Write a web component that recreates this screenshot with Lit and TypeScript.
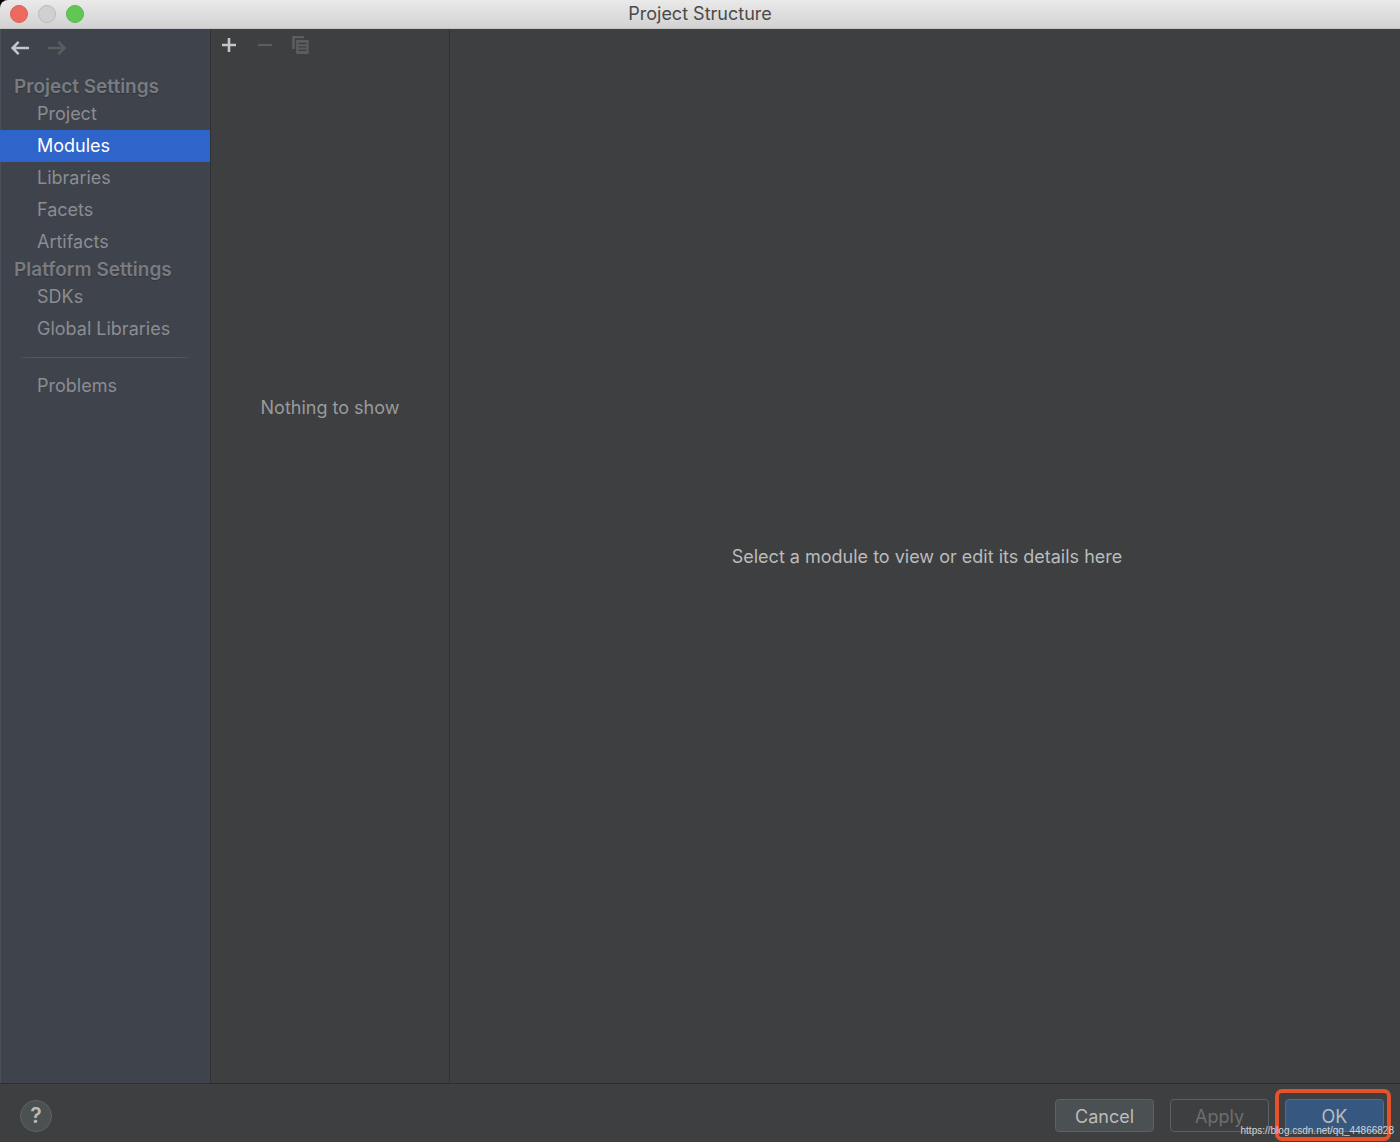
import { LitElement, html, css, svg } from "lit";
import { customElement, state } from "lit/decorators.js";

interface Section {
  title: string;
  items: string[];
}

const SECTIONS: Section[] = [
  { title: "Project Settings", items: ["Project", "Modules", "Libraries", "Facets", "Artifacts"] },
  { title: "Platform Settings", items: ["SDKs", "Global Libraries"] },
];

const arrowLeft = svg`<path d="M19 10H2.5M8.6 3.9L2.6 10L8.6 16.1" fill="none" stroke="currentColor" stroke-width="2.5"/>`;
const arrowRight = svg`<path d="M2 10H18.5M12.4 3.9L18.4 10L12.4 16.1" fill="none" stroke="currentColor" stroke-width="2.5"/>`;
const plus = svg`<path d="M10 3V17M3 10H17" fill="none" stroke="currentColor" stroke-width="2.6"/>`;
const minus = svg`<path d="M3 10H17" fill="none" stroke="currentColor" stroke-width="2.2"/>`;
const copy = svg`
  <path d="M1.2 1H13.2V3.2H3.8V14H1.2Z" fill="currentColor"/>
  <path fill-rule="evenodd" d="M5.2 5H17.6V19H5.2ZM7.4 7.8V9.2H15.4V7.8ZM7.4 11.2V12.6H15.4V11.2ZM7.4 14.6V16H15.4V14.6Z" fill="currentColor"/>`;

@customElement("app-root")
export class AppRoot extends LitElement {
  @state() private selected = "Modules";

  static styles = css`
    :host {
      display: flex;
      flex-direction: column;
      min-height: 100vh;
      background: #3d3f41;
      color: #bbbbbb;
      font: 18px/22px Inter, "Liberation Sans", sans-serif;
    }
    * {
      box-sizing: border-box;
    }
    button {
      font: inherit;
      color: inherit;
      margin: 0;
      padding: 0;
      border: 0;
      background: none;
    }
    svg {
      display: block;
    }
    .corner {
      background: #000;
    }
    .titlebar {
      display: grid;
      grid-template-columns: 1fr auto 1fr;
      align-items: center;
      height: 29px;
      padding: 0 10px;
      border-radius: 8px 0 0 0;
      border-bottom: 1px solid #c4c4c4;
      background: linear-gradient(#eaeaea, #d2d2d2);
      color: #4a4a4a;
    }
    .lights {
      display: flex;
      gap: 10px;
    }
    .light {
      width: 18px;
      height: 18px;
      border-radius: 50%;
      border: 1px solid #dc5f55;
      background: #ed6a5f;
    }
    .light.idle {
      border-color: #bcbcbc;
      background: #d0d0d0;
    }
    .light.zoom {
      border-color: #58b84b;
      background: #61c654;
    }
    .title {
      margin: 0;
      font-size: 18px;
      line-height: 24px;
      font-weight: 400;
    }
    .body {
      display: flex;
      flex: 1;
    }
    .sidebar {
      flex: 0 0 211px;
      border-right: 1px solid #2f3235;
      background: linear-gradient(90deg, #4a4f58 1px, #3e434c 1px);
      color: #8b8d91;
    }
    .history {
      display: flex;
      align-items: flex-start;
      gap: 16px;
      height: 46px;
      padding: 9px 10px;
      color: #c3c6ca;
    }
    button:disabled {
      color: #5b5e61;
    }
    .section {
      margin: 0;
      padding-left: 14px;
      font-size: 19px;
      line-height: 23px;
      font-weight: 600;
      color: #787b80;
      text-shadow: 0 1px 1px #33373e;
    }
    .list {
      margin: 0;
      padding: 0;
      list-style: none;
    }
    .item {
      display: block;
      width: 100%;
      height: 32px;
      padding-left: 37px;
      text-align: left;
    }
    .item.selected {
      background: #2f65ca;
      color: #ffffff;
    }
    .rule {
      height: 1px;
      margin: 12px 20px;
      border: 0;
      background: linear-gradient(90deg, #464b53, #555960 8%, #555960 92%, #464b53);
    }
    .modules {
      display: flex;
      flex-direction: column;
      flex: 0 0 239px;
      border-right: 1px solid #2e3032;
    }
    .toolbar {
      display: flex;
      align-items: flex-start;
      gap: 16px;
      height: 36px;
      padding: 6px 8px;
      color: #c3c5c7;
    }
    .empty {
      display: grid;
      grid-template-rows: 1fr auto 2fr;
      flex: 1;
      justify-items: center;
    }
    .empty p {
      grid-row: 2;
      margin: 0;
      color: #999b9c;
    }
    .details {
      display: grid;
      flex: 1;
      place-items: center;
      padding: 2px 0 0 4px;
    }
    .details p {
      margin: 0;
    }
    .footer {
      display: flex;
      align-items: center;
      gap: 16px;
      height: 59px;
      padding: 5px 16px 0 20px;
      border-top: 1px solid #2c2e30;
    }
    .help {
      width: 32px;
      height: 32px;
      margin-right: auto;
      border: 1px solid #5e6364;
      border-radius: 50%;
      background: #4b5051;
      font-size: 21px;
      font-weight: 600;
    }
    .action {
      display: block;
      width: 99px;
      height: 33px;
      padding-top: 2px;
      border: 1px solid #5d6162;
      border-radius: 4px;
      background: #4b5052;
    }
    .action.apply {
      background: none;
      color: #6c6e70;
    }
    .action.ok {
      border-color: #4c708c;
      background: #365880;
    }
    .highlight {
      position: relative;
    }
    .highlight::after {
      content: "";
      position: absolute;
      inset: -10px -7px -9px -10px;
      border: 4px solid #e5532d;
      border-radius: 7px;
      pointer-events: none;
    }
    .credit {
      position: absolute;
      z-index: 1;
      right: -10px;
      bottom: -5px;
      font: 10px/12px "Liberation Sans", sans-serif;
      color: #d4d6d8;
      white-space: nowrap;
      pointer-events: none;
    }
  `;

  private icon(shape: unknown) {
    return html`<svg width="20" height="20" viewBox="0 0 20 20" aria-hidden="true">${shape}</svg>`;
  }

  private item(name: string) {
    return html`<button
      class="item ${name === this.selected ? "selected" : ""}"
      @click=${() => (this.selected = name)}
    >${name}</button>`;
  }

  render() {
    return html`
      <div class="corner">
        <header class="titlebar">
          <div class="lights">
            <button class="light" aria-label="Close"></button>
            <button class="light idle" aria-label="Minimize"></button>
            <button class="light zoom" aria-label="Zoom"></button>
          </div>
          <h1 class="title">Project Structure</h1>
        </header>
      </div>
      <main class="body">
        <nav class="sidebar">
          <div class="history">
            <button aria-label="Back">${this.icon(arrowLeft)}</button>
            <button aria-label="Forward" disabled>${this.icon(arrowRight)}</button>
          </div>
          ${SECTIONS.map(
            (section) => html`
              <h2 class="section">${section.title}</h2>
              <ul class="list">
                ${section.items.map((name) => html`<li>${this.item(name)}</li>`)}
              </ul>
            `
          )}
          <hr class="rule" />
          ${this.item("Problems")}
        </nav>
        <section class="modules">
          <div class="toolbar">
            <button aria-label="Add">${this.icon(plus)}</button>
            <button aria-label="Remove" disabled>${this.icon(minus)}</button>
            <button aria-label="Copy" disabled>${this.icon(copy)}</button>
          </div>
          <div class="empty"><p>Nothing to show</p></div>
        </section>
        <section class="details">
          <p>Select a module to view or edit its details here</p>
        </section>
      </main>
      <footer class="footer">
        <button class="help" aria-label="Help">?</button>
        <button class="action">Cancel</button>
        <button class="action apply" disabled>Apply</button>
        <div class="highlight">
          <button class="action ok">OK</button>
          <span class="credit">https://blog.csdn.net/qq_44866828</span>
        </div>
      </footer>
    `;
  }
}
